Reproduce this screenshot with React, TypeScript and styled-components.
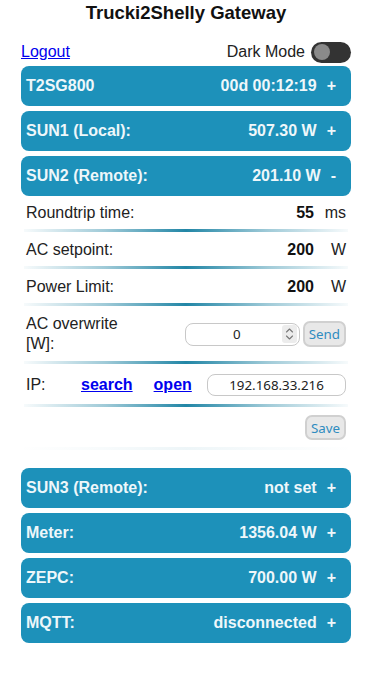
import React from 'react';
import styled, { createGlobalStyle } from 'styled-components';

const GlobalStyle = createGlobalStyle`
  body {
    margin: 0;
    background: #fff;
    color: #222;
    font-family: 'Liberation Sans', Arial, sans-serif;
    font-size: 16px;
  }
`;

const Page = styled.div`
  width: 330px;
  margin-left: 21px;
`;

const Title = styled.h3`
  margin: 2px 0 17px;
  font-size: 18.5px;
  font-weight: bold;
  text-align: center;
  color: #111;
`;

const TopRow = styled.div`
  display: flex;
  align-items: center;
  justify-content: space-between;
  height: 22px;
  margin-bottom: 3px;
`;

const PlainLink = styled.a`
  color: #0000ee;
  text-decoration: underline;
`;

const DarkLabel = styled.label`
  display: flex;
  align-items: center;
  gap: 6px;
  color: #222;
`;

const Switch = styled.span`
  position: relative;
  display: inline-block;
  width: 40px;
  height: 21px;
  border-radius: 11px;
  background: #333;

  &::after {
    content: '';
    position: absolute;
    left: 3px;
    top: 2.5px;
    width: 16px;
    height: 16px;
    border-radius: 50%;
    background: #8a8a8a;
  }
`;

const PanelList = styled.div`
  display: flex;
  flex-direction: column;
  gap: 5px;
`;

const Bar = styled.div`
  display: flex;
  align-items: center;
  justify-content: space-between;
  height: 40px;
  padding: 0 15px 0 5px;
  border-radius: 8px;
  background: #1d91ba;
  color: #eef7fa;
  font-weight: bold;
  font-size: 16px;
`;

const BarValue = styled.span`
  display: flex;
  align-items: center;
`;

const Sign = styled.span`
  margin-left: 10px;
`;

const Details = styled.div`
  padding-bottom: 12px;
`;

const Row = styled.div<{ $tall?: boolean }>`
  display: flex;
  align-items: center;
  min-height: ${p => (p.$tall ? '25px' : '19px')};
  padding: 7px 5px;
  line-height: ${p => (p.$tall ? '20px' : '19px')};
`;

const Label = styled.span<{ $width?: number }>`
  flex: ${p => (p.$width ? 'none' : '1')};
  width: ${p => (p.$width ? `${p.$width}px` : 'auto')};
  color: #222;
`;

const Value = styled.span`
  font-weight: bold;
  color: #111;
`;

const Unit = styled.span`
  width: 32px;
  text-align: right;
  color: #222;
`;

const Separator = styled.div<{ $faint?: boolean }>`
  height: 3px;
  margin: 0 3px 1px;
  background: linear-gradient(
    90deg,
    rgba(42, 138, 168, 0.04),
    rgba(42, 138, 168, 0.45) 25%,
    rgba(34, 134, 166, 1) 50%,
    rgba(42, 138, 168, 0.45) 75%,
    rgba(42, 138, 168, 0.04)
  );
  opacity: ${p => (p.$faint ? 0.08 : 1)};
`;

const Controls = styled.div`
  margin-left: auto;
  display: flex;
  align-items: center;
  gap: 3px;
`;

const NumberField = styled.div`
  box-sizing: border-box;
  display: flex;
  align-items: center;
  width: 115px;
  height: 23px;
  padding: 0 2px 0 6px;
  border: 1.5px solid #c8c8c8;
  border-radius: 8px;
`;

const NumberInput = styled.input`
  flex: 1;
  min-width: 0;
  padding: 0;
  border: none;
  background: transparent;
  font-family: 'Noto Sans', sans-serif;
  font-size: 13.33px;
  color: #222;
  text-align: center;
  outline: none;
`;

const SpinBox = styled.span`
  display: flex;
  align-items: center;
  justify-content: center;
  width: 15px;
  height: 18px;
  border-radius: 3px;
  background: #ececec;
`;

const TextInput = styled.input`
  box-sizing: border-box;
  width: 139px;
  height: 22px;
  margin-left: auto;
  border: 1.5px solid #c8c8c8;
  border-radius: 8px;
  font-family: 'Noto Sans', sans-serif;
  font-size: 13.33px;
  color: #222;
  text-align: center;
  outline: none;
`;

const SmallButton = styled.button<{ $h?: number }>`
  box-sizing: border-box;
  height: ${p => p.$h ?? 26}px;
  padding: 0 4px;
  border: 2px solid #d0d0d0;
  border-radius: 7px;
  background: #e8e8e8;
  color: #2f8cc0;
  font-family: 'Noto Sans', sans-serif;
  font-size: 13.33px;
`;

const SaveRow = styled.div`
  display: flex;
  justify-content: flex-end;
  padding: 7px 5px;
`;

const BoldLink = styled.a<{ $gap: number }>`
  margin-right: ${p => p.$gap}px;
  color: #0000ee;
  font-weight: bold;
  text-decoration: underline;
`;

type BarItem = { label: string; value: string; open?: boolean };

const topBars: BarItem[] = [
  { label: 'T2SG800', value: '00d 00:12:19' },
  { label: 'SUN1 (Local):', value: '507.30 W' },
  { label: 'SUN2 (Remote):', value: '201.10 W', open: true },
];

const bottomBars: BarItem[] = [
  { label: 'SUN3 (Remote):', value: 'not set' },
  { label: 'Meter:', value: '1356.04 W' },
  { label: 'ZEPC:', value: '700.00 W' },
  { label: 'MQTT:', value: 'disconnected' },
];

const stats = [
  { label: 'Roundtrip time:', value: '55', unit: 'ms' },
  { label: 'AC setpoint:', value: '200', unit: 'W' },
  { label: 'Power Limit:', value: '200', unit: 'W' },
];

const PanelBar: React.FC<{ item: BarItem }> = ({ item }) => (
  <Bar>
    <span>{item.label}</span>
    <BarValue>
      {item.value}
      <Sign>{item.open ? '-' : '+'}</Sign>
    </BarValue>
  </Bar>
);

const SpinArrows = () => (
  <SpinBox>
    <svg width="9" height="14" viewBox="0 0 9 14" fill="none" stroke="#777" strokeWidth="1.1" strokeLinecap="round" strokeLinejoin="round">
      <path d="M1.5 5 L4.5 2 L7.5 5" />
      <path d="M1.5 9 L4.5 12 L7.5 9" />
    </svg>
  </SpinBox>
);

const App: React.FC = () => {
  return (
    <>
      <GlobalStyle />
      <Page>
        <Title>Trucki2Shelly Gateway</Title>
        <TopRow>
          <PlainLink href="#">Logout</PlainLink>
          <DarkLabel>
            Dark Mode
            <Switch />
          </DarkLabel>
        </TopRow>

        <PanelList>
          {topBars.map(item => (
            <div key={item.label}>
              <PanelBar item={item} />
              {item.open && (
                <Details>
                  {stats.map(s => (
                    <React.Fragment key={s.label}>
                      <Row>
                        <Label>{s.label}</Label>
                        <Value>{s.value}</Value>
                        <Unit>{s.unit}</Unit>
                      </Row>
                      <Separator />
                    </React.Fragment>
                  ))}

                  <Row $tall>
                    <Label $width={110}>AC overwrite [W]:</Label>
                    <Controls>
                      <NumberField>
                        <NumberInput type="text" inputMode="numeric" defaultValue="0" />
                        <SpinArrows />
                      </NumberField>
                      <SmallButton>Send</SmallButton>
                    </Controls>
                  </Row>
                  <Separator />

                  <Row $tall>
                    <Label $width={55}>IP:</Label>
                    <BoldLink href="#" $gap={21}>search</BoldLink>
                    <BoldLink href="#" $gap={0}>open</BoldLink>
                    <TextInput type="text" defaultValue="192.168.33.216" />
                  </Row>
                  <Separator />

                  <SaveRow>
                    <SmallButton $h={25}>Save</SmallButton>
                  </SaveRow>
                  <Separator $faint />
                </Details>
              )}
            </div>
          ))}
          {bottomBars.map(item => (
            <PanelBar key={item.label} item={item} />
          ))}
        </PanelList>
      </Page>
    </>
  );
};

export default App;
